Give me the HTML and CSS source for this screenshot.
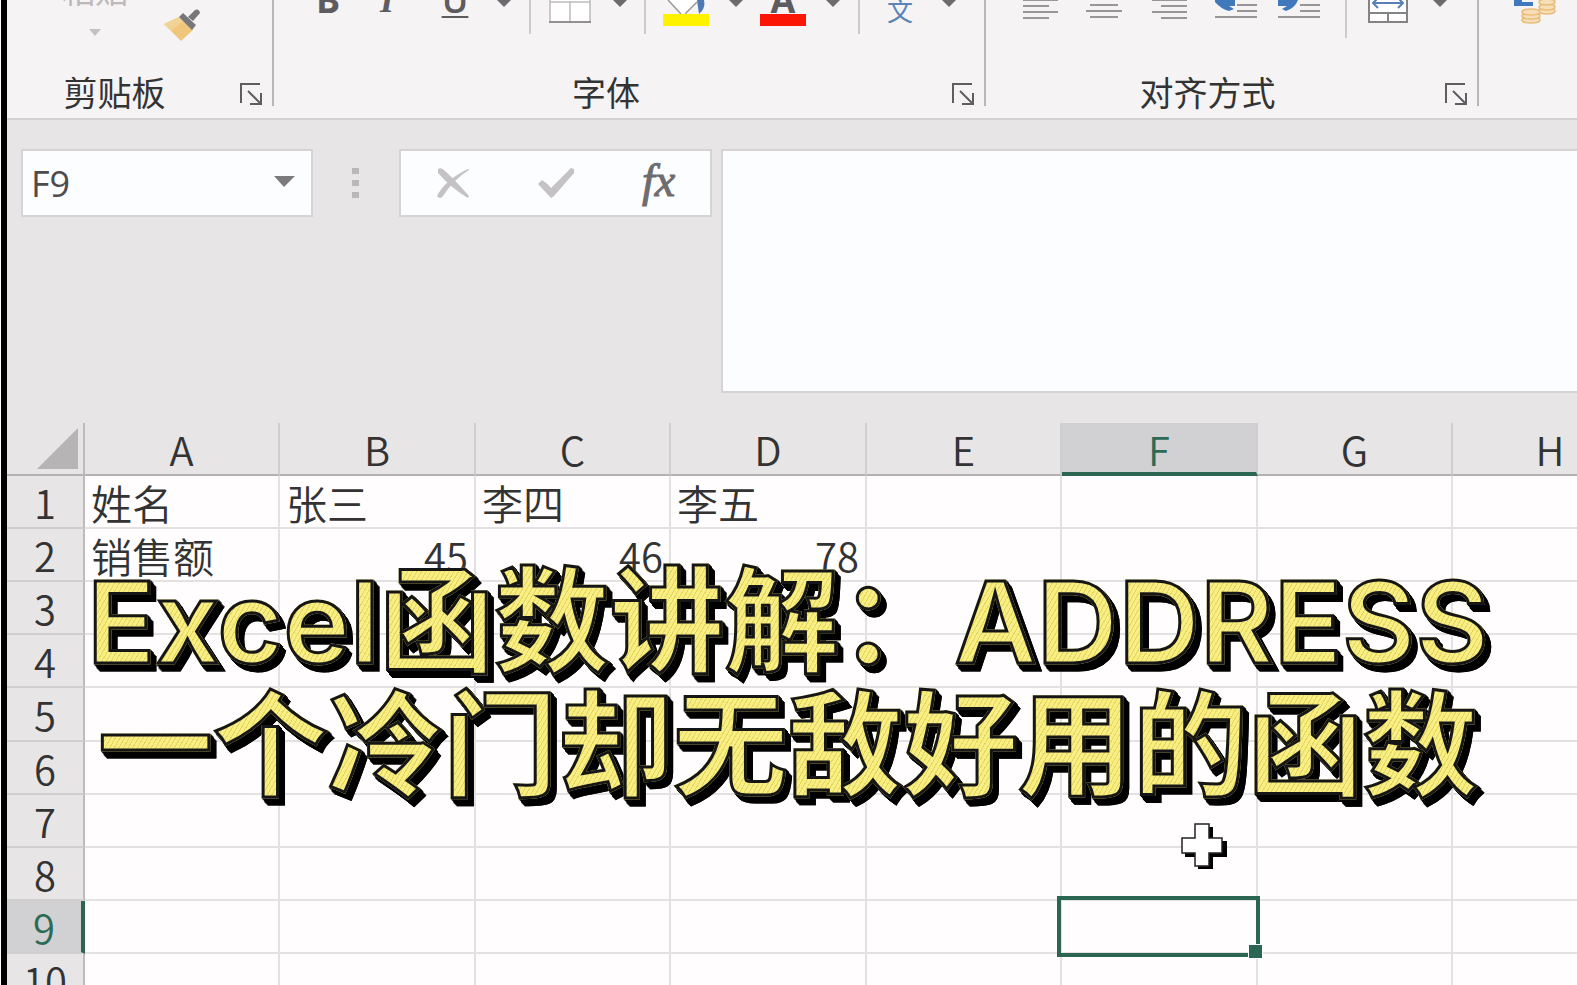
FILE: index.html
```html
<!DOCTYPE html>
<html lang="zh-CN">
<head>
<meta charset="utf-8">
<title>Excel函数讲解：ADDRESS</title>
<link rel="stylesheet" href="styles.css">
</head>
<body>
<div class="app">
  <header class="ribbon">
    <section class="group clipboard">
      <div class="tools">
        <button class="tool paste"><span>粘贴</span>
          <svg width="12" height="7" viewBox="0 0 12 7"><path d="M0 0H12L6 7Z" fill="#c3c1c2"/></svg>
        </button>
        <button class="tool" aria-label="格式刷"><svg width="40" height="42" viewBox="0 0 40 42"><path d="M2 24 17 17 31 30 19 41Z" fill="#efc67c"/><path d="M2 24 17 17 21 21 9 31Z" fill="#f3d296"/><path d="M17 17 21 13 34 25 30 30Z" fill="#77777a"/><path d="M26 17 33 10Q37 8 38 13L31 21Z" fill="#77777a"/></svg></button>
      </div>
      <footer class="caption"><span>剪贴板</span><button class="launcher" aria-label="剪贴板设置"><svg width="23" height="23" viewBox="0 0 23 23"><path d="M1 20V1H20M8 8 20 20M21 10V21H10" /></svg></button></footer>
    </section>

    <section class="group font">
      <div class="tools">
        <button class="tool letter bold">B</button>
        <button class="tool letter italic">I</button>
        <button class="tool letter under">U</button>
        <button class="tool" aria-label="下划线选项"><svg class="caret" width="14" height="8" viewBox="0 0 14 8"><path d="M0 0H14L7 7Z"/></svg></button>
        <i class="rule"></i>
        <button class="tool" aria-label="边框"><svg width="44" height="40" viewBox="0 0 44 40"><path d="M2 0H42V22H2Z" fill="#fff"/><path d="M2 0V22M42 0V22M22 2V22M2 2H42" stroke="#bdbbbc" stroke-width="1.5" fill="none"/><path d="M1 22H43" stroke="#929092" stroke-width="2"/></svg></button>
        <button class="tool" aria-label="边框选项"><svg class="caret" width="14" height="8" viewBox="0 0 14 8"><path d="M0 0H14L7 7Z"/></svg></button>
        <i class="rule"></i>
        <button class="tool" aria-label="填充颜色"><svg width="46" height="40" viewBox="0 0 46 40"><path d="M5 0 18 14H22L34 2V0Z" fill="#fff"/><path d="M5 0 18 14M22 14 34 2" stroke="#9b999a" stroke-width="1.5"/><path d="M34 0H41Q43 8 36 14Z" fill="#4c78b5"/><path d="M0 14H46V26H0Z" fill="#fff200"/></svg></button>
        <button class="tool" aria-label="填充颜色选项"><svg class="caret" width="14" height="8" viewBox="0 0 14 8"><path d="M0 0H14L7 7Z"/></svg></button>
        <button class="tool letter color"><span>A</span><svg width="46" height="12" viewBox="0 0 46 12"><path d="M0 0H46V12H0Z" fill="#fb1505"/></svg></button>
        <button class="tool" aria-label="字体颜色选项"><svg class="caret" width="14" height="8" viewBox="0 0 14 8"><path d="M0 0H14L7 7Z"/></svg></button>
        <i class="rule"></i>
        <button class="tool phonetic">文</button>
        <button class="tool" aria-label="拼音选项"><svg class="caret" width="14" height="8" viewBox="0 0 14 8"><path d="M0 0H14L7 7Z"/></svg></button>
      </div>
      <footer class="caption"><span>字体</span><button class="launcher" aria-label="字体设置"><svg width="23" height="23" viewBox="0 0 23 23"><path d="M1 20V1H20M8 8 20 20M21 10V21H10" /></svg></button></footer>
    </section>

    <section class="group align">
      <div class="tools">
        <button class="tool" aria-label="左对齐"><svg class="lines" width="36" height="40" viewBox="0 0 36 40"><path d="M0 0H35M0 6H26M0 12H35M0 18H26"/></svg></button>
        <button class="tool" aria-label="居中"><svg class="lines" width="36" height="40" viewBox="0 0 36 40"><path d="M4 5H32M0 11H36M4 17H32"/></svg></button>
        <button class="tool" aria-label="右对齐"><svg class="lines" width="36" height="40" viewBox="0 0 36 40"><path d="M1 0H36M10 6H36M1 12H36M10 18H36"/></svg></button>
        <button class="tool" aria-label="减少缩进"><svg class="lines" width="42" height="40" viewBox="0 0 42 40"><path d="M22 5H42M22 11H42M0 17H42"/><path class="arrow" d="M0 0H20V6H14L19 9 14 11Q6 9 0 2Z"/></svg></button>
        <button class="tool" aria-label="增加缩进"><svg class="lines" width="42" height="40" viewBox="0 0 42 40"><path d="M22 5H42M22 11H42M0 17H42"/><path class="arrow" d="M0 0H20Q17 8 8 11L4 9 9 6H0Z"/></svg></button>
        <i class="rule tall"></i>
        <button class="tool" aria-label="合并后居中"><svg width="42" height="40" viewBox="0 0 42 40"><path d="M2 0H40V22H2Z" fill="#fff"/><path d="M2 0V22H40V0M2 13H40M21 13V22" fill="none" stroke="#858386" stroke-width="2"/><path d="M6 3H36M11 -2 6 3 11 8M31 -2 36 3 31 8" fill="none" stroke="#5680b6" stroke-width="2"/></svg></button>
        <button class="tool" aria-label="合并选项"><svg class="caret" width="14" height="8" viewBox="0 0 14 8"><path d="M0 0H14L7 7Z"/></svg></button>
      </div>
      <footer class="caption"><span>对齐方式</span><button class="launcher" aria-label="对齐设置"><svg width="23" height="23" viewBox="0 0 23 23"><path d="M1 20V1H20M8 8 20 20M21 10V21H10" /></svg></button></footer>
    </section>

    <section class="group number">
      <div class="tools">
        <button class="tool" aria-label="会计数字格式"><svg width="42" height="40" viewBox="0 0 42 40"><path d="M0 0H8V2H19V6H0Z" fill="#4079bb"/><g fill="#f6dfb8" stroke="#e9bd78" stroke-width="1.5"><ellipse cx="33" cy="11" rx="8" ry="3"/><ellipse cx="33" cy="7" rx="8" ry="3"/><ellipse cx="33" cy="2" rx="8" ry="3"/><ellipse cx="17" cy="20" rx="9" ry="3"/><ellipse cx="17" cy="16" rx="9" ry="3"/><ellipse cx="17" cy="12" rx="9" ry="3"/></g></svg></button>
      </div>
    </section>
  </header>

  <div class="formula-bar">
    <div class="name-box">
      <input class="name-input" type="text" value="F9" aria-label="名称框">
      <button class="drop" aria-label="打开名称列表"><svg width="21" height="11" viewBox="0 0 21 11"><path d="M0 0H21L10 11Z" fill="#7c7a7d"/></svg></button>
    </div>
    <svg class="grip" width="7" height="31" viewBox="0 0 7 31"><path d="M0 0H7V6H0ZM0 12H7V18H0ZM0 24H7V30H0Z" fill="#b9b7b8"/></svg>
    <div class="entry">
      <button class="entry-btn" aria-label="取消"><svg width="34" height="32" viewBox="0 0 34 32"><path d="M2 2Q5 0 8 3Q20 14 33 29L32 31Q15 21 2 6ZM33 3Q18 12 7 29Q4 33 1 29Q9 13 32 2Z" fill="#c4c2c4"/></svg></button>
      <button class="entry-btn" aria-label="输入"><svg width="38" height="32" viewBox="0 0 38 32"><path d="M1 17 5 13Q10 16 14 21L34 1 37 2V6L17 29 14 31Z" fill="#c4c2c4"/></svg></button>
      <button class="entry-btn fx" aria-label="插入函数"><span class="f">f</span><span class="x">x</span></button>
    </div>
    <textarea class="formula" aria-label="编辑栏"></textarea>
  </div>

  <main class="sheet">
    <table class="cells">
      <colgroup><col class="c-head"><col class="c-a"><col class="c-b"><col class="c-a"><col class="c-b"><col class="c-a"><col class="c-b"><col class="c-a"><col class="c-b"></colgroup>
      <thead>
        <tr><th class="corner"><svg width="42" height="41" viewBox="0 0 42 41"><path d="M41 0V41H0Z" fill="#b6b4b5"/></svg></th><th>A</th><th>B</th><th>C</th><th>D</th><th>E</th><th class="on">F</th><th>G</th><th>H</th></tr>
      </thead>
      <tbody>
        <tr><th>1</th><td>姓名</td><td>张三</td><td>李四</td><td>李五</td><td></td><td></td><td></td><td></td></tr>
        <tr><th>2</th><td>销售额</td><td class="num">45</td><td class="num">46</td><td class="num">78</td><td></td><td></td><td></td><td></td></tr>
        <tr><th>3</th><td></td><td></td><td></td><td></td><td></td><td></td><td></td><td></td></tr>
        <tr><th>4</th><td></td><td></td><td></td><td></td><td></td><td></td><td></td><td></td></tr>
        <tr><th>5</th><td></td><td></td><td></td><td></td><td></td><td></td><td></td><td></td></tr>
        <tr><th>6</th><td></td><td></td><td></td><td></td><td></td><td></td><td></td><td></td></tr>
        <tr><th>7</th><td></td><td></td><td></td><td></td><td></td><td></td><td></td><td></td></tr>
        <tr><th>8</th><td></td><td></td><td></td><td></td><td></td><td></td><td></td><td></td></tr>
        <tr><th class="on">9</th><td></td><td></td><td></td><td></td><td></td><td class="active"></td><td></td><td></td></tr>
        <tr><th>10</th><td></td><td></td><td></td><td></td><td></td><td></td><td></td><td></td></tr>
      </tbody>
    </table>
    <h1 class="title"><span class="line"><span class="latin">Excel</span>函数讲解：<span class="latin">ADDRESS</span></span><span class="line">一个冷门却无敌好用的函数</span></h1>
    <svg class="pointer" width="46" height="46" viewBox="0 0 46 46"><path d="M17 4H32V18H46V34H32V46H17V34H4V18H17Z" fill="#000"/><path d="M14 1H28V15H41V30H28V43H14V30H1V15H14Z" fill="#fff" stroke="#222" stroke-width="1.5"/></svg>
  </main>
</div>
</body>
</html>
```
FILE: styles.css
```css
* { box-sizing: border-box; }

body {
  margin: 0;
  background: #fff;
  font-family: "Noto Sans CJK SC", sans-serif;
  color: #333;
}

button {
  margin: 0;
  padding: 0;
  border: 0;
  background: none;
  font: inherit;
  color: inherit;
}

svg { display: block; flex: none; }

.app {
  display: flex;
  flex-direction: column;
  height: 100vh;
  margin-left: 1px;
  border-left: 6px solid #000;
  overflow: hidden;
  background: #e7e5e6;
}

/* Ribbon */
.ribbon {
  display: flex;
  flex: none;
  height: 120px;
  border-bottom: 2px solid #d2d0d1;
  background: #f5f3f4;
  overflow: hidden;
}

.group {
  position: relative;
  display: flex;
  flex: none;
  flex-direction: column;
  height: 106px;
  border-right: 2px solid #b9b7b8;
}

.clipboard { width: 267px; }
.font { width: 712px; }
.align { width: 493px; }
.number { flex: 1; border-right: 0; }

.tools {
  display: grid;
  grid-auto-flow: column;
  justify-content: start;
  height: 60px;
  overflow: hidden;
}

.clipboard .tools { grid-template-columns: 100px 50px; padding-left: 38px; }
.font .tools { grid-template-columns: 52px 66px 70px 28px 24px 56px 44px 6px 76px 24px 70px 30px 22px 60px 38px; padding-left: 28px; }
.align .tools { grid-template-columns: 72px 54px 76px 58px 68px 26px 58px 46px; padding-left: 19px; }
.number .tools { grid-template-columns: 42px; padding-left: 35px; }

.clipboard .tools .tool:last-child { justify-content: flex-start; padding-left: 17px; }

.tool {
  display: flex;
  justify-content: center;
  align-items: flex-start;
}

.paste {
  flex-direction: column;
  justify-content: flex-start;
  align-items: center;
  gap: 23px;
  font-size: 33px;
  line-height: 34px;
  color: #bbb9ba;
}

.paste span { margin-top: -28px; }

.letter {
  font-family: "Open Sans", sans-serif;
  font-size: 36px;
  font-weight: 700;
  line-height: 0;
  color: #5e5c5f;
}

.italic { font-family: "Liberation Serif", serif; font-style: italic; }
.under { font-weight: 600; text-decoration: underline; text-decoration-thickness: 2px; text-underline-offset: 3px; }
.color { flex-direction: column; justify-content: flex-start; align-items: center; gap: 14px; }
.phonetic { font-size: 26px; line-height: 20px; color: #5b83b5; }

.caret { fill: #6d6b6e; }
.lines { fill: none; stroke: #989698; stroke-width: 2; }
.lines .arrow { fill: #4079bb; stroke: none; }

.rule {
  justify-self: center;
  width: 2px;
  height: 34px;
  background: #cccacb;
}

.rule.tall { height: 38px; }

.caption {
  display: flex;
  justify-content: center;
  align-items: center;
  height: 64px;
  margin-top: auto;
  margin-bottom: -18px;
  font-size: 34px;
  line-height: 40px;
  color: #333;
}

.launcher {
  position: absolute;
  right: 9px;
  bottom: 0;
}

.clipboard .caption { padding-right: 50px; }
.font .caption { padding-right: 46px; }
.align .caption { padding-right: 48px; }

.launcher svg { fill: none; stroke: #5f5d60; stroke-width: 2; }

/* Formula bar */
.formula-bar {
  display: flex;
  flex: none;
  align-items: flex-start;
  height: 303px;
  padding: 29px 0 0 14px;
}

.name-box,
.entry {
  display: flex;
  align-items: center;
  height: 68px;
  border: 2px solid #d5d3d4;
  background: #fcfdff;
}

.name-box { width: 292px; padding-right: 16px; }
.drop { padding-bottom: 4px; }

.name-input {
  flex: 1;
  min-width: 0;
  padding: 0 0 0 8px;
  border: 0;
  background: none;
  font-family: "Open Sans", sans-serif;
  font-size: 36px;
  color: #4d4b4e;
}

.grip { margin: 19px 40px 0 39px; }
.entry { width: 313px; }
.entry-btn { display: flex; flex: 1; justify-content: center; align-items: center; height: 60px; }

.fx {
  align-items: baseline;
  font-family: "Liberation Serif", serif;
  font-style: italic;
  line-height: 56px;
  color: #6e6c6f;
  -webkit-text-stroke: 1px #6e6c6f;
}

.fx .f { font-size: 46px; }
.fx .x { font-size: 46px; }

.formula {
  flex: 1;
  height: 244px;
  margin-left: 9px;
  border: 2px solid #d5d3d4;
  border-right: 0;
  background: #fcfdff;
  resize: none;
}

/* Sheet */
.sheet {
  position: relative;
  flex: 1;
  overflow: hidden;
  background: #fffdfe;
}

.cells {
  width: 1642px;
  table-layout: fixed;
  border-collapse: separate;
  border-spacing: 0;
  font-size: 41px;
  font-weight: 350;
  line-height: 40px;
}

.c-head { width: 78px; }
.c-a { width: 195px; }
.c-b { width: 196px; }

.cells tr { height: 53px; }

.cells th,
.cells td {
  height: 53px;
  padding: 0 6px;
  border-right: 2px solid #e3e1e2;
  border-bottom: 2px solid #e3e1e2;
  white-space: nowrap;
}

.cells td { text-align: left; }
.cells .num { text-align: right; font-size: 40px; }

.cells th {
  padding: 0;
  border-color: #cfcdce;
  background: #e7e5e6;
  font-size: 40px;
  font-weight: 350;
  text-align: center;
}

.cells tbody th,
.cells .corner { border-right-color: #bdbbbc; }
.cells thead th { border-bottom-color: #b3b1b2; }
.cells .corner { padding: 0 4px 0 30px; }

.cells .on { background: #d1d0d2; color: #2c6a55; }
.cells thead .on { padding-top: 2px; border-bottom: 4px solid #2a6652; }
.cells tbody .on { border-right: 4px solid #2a6652; }

.cells tbody tr:nth-child(5) { height: 54px; }

.active { position: relative; }

.active::before {
  content: "";
  position: absolute;
  inset: -5px -4px -5px -5px;
  border: 4px solid #2a6652;
}

.active::after {
  content: "";
  position: absolute;
  right: -7px;
  bottom: -7px;
  width: 13px;
  height: 13px;
  border: 1px solid #fff;
  background: #2a6652;
}

/* Caption laid over the sheet */
.title {
  position: absolute;
  top: 137px;
  left: 80px;
  margin: 0;
  font-family: Inter, "Noto Sans CJK SC", sans-serif;
  font-size: 115px;
  font-weight: 600;
  line-height: 124px;
  text-align: center;
  white-space: nowrap;
  filter: drop-shadow(1px 1px 0 #000) drop-shadow(2px 2px 0 #000) drop-shadow(3px 4px 0 #000);
}

.line {
  display: block;
  background: repeating-linear-gradient(120deg, #f8ee84 0 3px, #e3d75f 3px 4px);
  -webkit-background-clip: text;
  background-clip: text;
  color: transparent;
  -webkit-text-stroke: 3px #161616;
}

.latin { font-size: 113px; }

.pointer {
  position: absolute;
  top: 400px;
  left: 1174px;
}
```
